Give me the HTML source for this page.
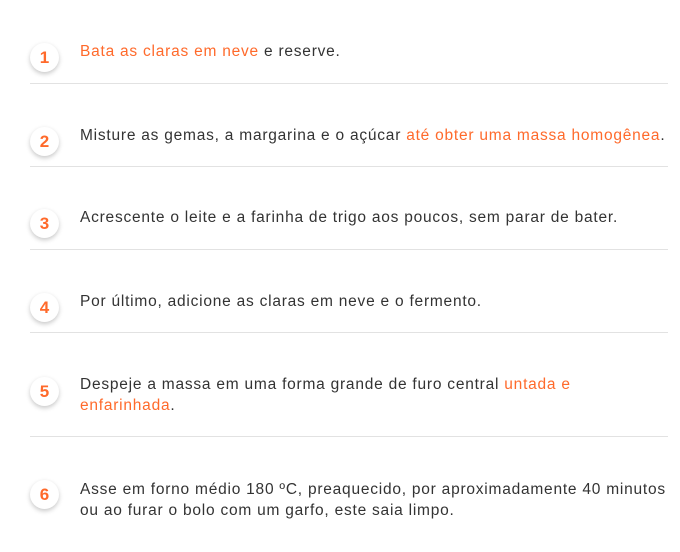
<!DOCTYPE html>
<html><head><meta charset="utf-8"><style>
body{margin:0;width:680px;height:552px;background:#fff;position:relative;font-family:"Liberation Sans",sans-serif;overflow:hidden}
.c{position:absolute;left:30px;width:29px;height:29px;border-radius:50%;background:#fff;box-shadow:0 2px 5px rgba(0,0,0,.22);color:#ff6a2b;font-weight:bold;font-size:17px;text-align:center;line-height:30px}
.t{position:absolute;left:80px;font-size:15.5px;letter-spacing:.77px;color:#333;line-height:21px;white-space:nowrap}
.o{color:#ff6a2b}
.h{position:absolute;left:30px;width:638px;height:1px;background:#e2e2e2}
</style></head><body>
<div class="c" style="top:43px">1</div>
<div class="t" style="top:41px"><span class="o">Bata as claras em neve</span> e reserve.</div>
<div class="h" style="top:83px"></div>
<div class="c" style="top:127px">2</div>
<div class="t" style="top:125px">Misture as gemas, a margarina e o açúcar <span class="o">até obter uma massa homogênea</span>.</div>
<div class="h" style="top:166px"></div>
<div class="c" style="top:209px">3</div>
<div class="t" style="top:207px">Acrescente o leite e a farinha de trigo aos poucos, sem parar de bater.</div>
<div class="h" style="top:249px"></div>
<div class="c" style="top:293px">4</div>
<div class="t" style="top:291px">Por último, adicione as claras em neve e o fermento.</div>
<div class="h" style="top:332px"></div>
<div class="c" style="top:377px">5</div>
<div class="t" style="top:374px">Despeje a massa em uma forma grande de furo central <span class="o">untada e</span><br><span class="o">enfarinhada</span>.</div>
<div class="h" style="top:436px"></div>
<div class="c" style="top:480px">6</div>
<div class="t" style="top:479px">Asse em forno médio 180 ºC, preaquecido, por aproximadamente 40 minutos<br>ou ao furar o bolo com um garfo, este saia limpo.</div>
</body></html>
